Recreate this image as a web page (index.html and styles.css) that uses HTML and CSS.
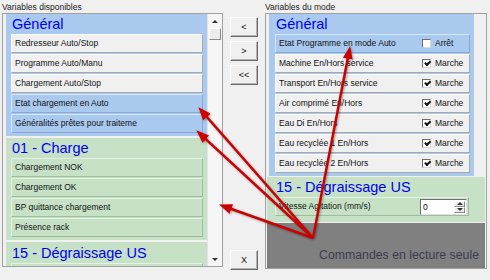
FILE: index.html
```html
<!DOCTYPE html>
<html lang="fr">

<head>
    <meta charset="UTF-8">
    <meta name="viewport" content="width=device-width, initial-scale=1.0">
    <title>Variables du mode</title>
    <link rel="stylesheet" href="styles.css">
</head>

<body>
    <div class="window">
        <!-- liste de gauche -->
        <section class="side side-left">
            <div class="caption">Variables disponibles</div>
            <div class="box box-left">
                <div class="list">
                    <div class="group group-blue">
                        <div class="group-head">Général</div>
                        <div class="item">Redresseur Auto/Stop</div>
                        <div class="item">Programme Auto/Manu</div>
                        <div class="item">Chargement Auto/Stop</div>
                        <div class="item sel">Etat chargement en Auto</div>
                        <div class="item sel">Généralités prêtes pour traiteme</div>
                    </div>
                    <div class="group group-green">
                        <div class="group-head">01 - Charge</div>
                        <div class="item">Chargement NOK</div>
                        <div class="item">Chargement OK</div>
                        <div class="item">BP quittance chargement</div>
                        <div class="item">Présence rack</div>
                    </div>
                    <div class="group group-green group-last">
                        <div class="group-head">15 - Dégraissage US</div>
                        <div class="item"></div>
                    </div>
                </div>
                <div class="scrollbar">
                    <div class="sb-btn"><span class="tri-up"></span></div>
                    <div class="sb-thumb"></div>
                    <div class="sb-track"></div>
                    <div class="sb-btn"><span class="tri-down"></span></div>
                </div>
            </div>
        </section>

        <!-- boutons -->
        <div class="buttons">
            <button class="btn">&lt;</button>
            <button class="btn">&gt;</button>
            <button class="btn">&lt;&lt;</button>
            <button class="btn btn-clear">X</button>
        </div>

        <!-- liste de droite -->
        <section class="side side-right">
            <div class="caption">Variables du mode</div>
            <div class="box box-right">
                <div class="group group-blue group-mode">
                    <div class="group-head">Général</div>
                    <div class="item row sel">
                        <span class="row-label">Etat Programme en mode Auto</span>
                        <span class="check"><span class="cb"></span>Arrêt</span>
                    </div>
                    <div class="item row">
                        <span class="row-label">Machine En/Hors service</span>
                        <span class="check"><span class="cb on"></span>Marche</span>
                    </div>
                    <div class="item row">
                        <span class="row-label">Transport En/Hors service</span>
                        <span class="check"><span class="cb on"></span>Marche</span>
                    </div>
                    <div class="item row">
                        <span class="row-label">Air comprimé En/Hors</span>
                        <span class="check"><span class="cb on"></span>Marche</span>
                    </div>
                    <div class="item row">
                        <span class="row-label">Eau Di En/Hors</span>
                        <span class="check"><span class="cb on"></span>Marche</span>
                    </div>
                    <div class="item row">
                        <span class="row-label">Eau recyclée 1 En/Hors</span>
                        <span class="check"><span class="cb on"></span>Marche</span>
                    </div>
                    <div class="item row">
                        <span class="row-label">Eau recyclée 2 En/Hors</span>
                        <span class="check"><span class="cb on"></span>Marche</span>
                    </div>
                </div>
                <div class="group group-green group-wide">
                    <div class="group-head">15 - Dégraissage US</div>
                    <div class="item row">
                        <span class="row-label">Vitesse Agitation (mm/s)</span>
                        <span class="spin">
                            <span class="spin-value">0</span>
                            <span class="spin-btns">
                                <span class="spin-up"><span class="tri-up"></span></span>
                                <span class="spin-down"><span class="tri-down"></span></span>
                            </span>
                        </span>
                    </div>
                </div>
                <div class="readonly">Commandes en lecture seule</div>
            </div>
        </section>
    </div>

    <!-- flèches d'annotation -->
    <svg class="arrows" width="490" height="280" viewBox="0 0 490 280">
        <defs>
            <marker id="head" markerWidth="13" markerHeight="10" refX="2" refY="5" orient="auto" markerUnits="userSpaceOnUse">
                <path d="M0,0 L13,5 L0,10 z" fill="#cc0000" />
            </marker>
        </defs>
        <g stroke="#cc0000" stroke-width="2.5" fill="none" marker-end="url(#head)">
            <line x1="313" y1="238" x2="205.6" y2="115.5" />
            <line x1="313" y1="238" x2="204.4" y2="137.8" />
            <line x1="313" y1="238" x2="229.4" y2="208.3" />
            <line x1="313" y1="238" x2="348.1" y2="56.8" />
        </g>
    </svg>
</body>

</html>
```

FILE: styles.css
```css
* {
    margin: 0;
    padding: 0;
    box-sizing: border-box;
    font-family: 'Liberation Sans', Arial, sans-serif;
}

body {
    background-color: #f0f0f0;
    color: #000;
    width: 490px;
    height: 280px;
    overflow: hidden;
    position: relative;
}

.window {
    display: flex;
    padding-left: 2px;
}

.side-left {
    width: 221px;
}

.side-right {
    width: 222px;
}

.caption {
    height: 13px;
    padding-top: 2px;
    font-size: 8.5px;
    line-height: 10px;
    color: #222;
}

.box {
    border: 1px solid #a0a0a0;
    background: #f0f0f0;
    overflow: hidden;
}

.box-left {
    height: 254px;
    display: flex;
}

.box-right {
    height: 256px;
    display: flex;
    flex-direction: column;
}

.list {
    flex: 1;
    overflow: hidden;
    padding-left: 3px;
}

.group {
    padding: 0 4px 2px 5px;
    margin-bottom: 2px;
}

.group-last {
    padding-top: 1px;
}

.group-blue {
    background: #a9c9ef;
}

.group-green {
    background: #c6e1c6;
}

.group-head {
    height: 20px;
    line-height: 20px;
    font-size: 14.5px;
    color: #0000f0;
    padding-left: 1px;
    white-space: nowrap;
}

.item {
    height: 19px;
    margin-bottom: 1px;
    border: 1px solid;
    border-color: #fdfdfd #a8a8a8 #a8a8a8 #fdfdfd;
    background: #f0f0f0;
    font-size: 8.5px;
    line-height: 17px;
    padding-left: 3px;
    white-space: nowrap;
    overflow: hidden;
    color: #111;
}

.item.sel {
    background: #a9c9ef;
    border-color: #d4e6fa #86a8d2 #86a8d2 #d4e6fa;
}

.group-green .item {
    background: #c6e1c6;
    border-color: #e4f2e4 #9cbc9c #9cbc9c #e4f2e4;
}

/* barre de défilement */
.scrollbar {
    width: 15px;
    display: flex;
    flex-direction: column;
    background: #f6f6f6;
    border-left: 1px solid #e4e4e4;
}

.sb-btn {
    height: 14px;
    display: flex;
    justify-content: center;
    align-items: center;
}

.sb-thumb {
    height: 12px;
    margin: 0 1px;
    border: 1px solid;
    border-color: #fff #8a8a8a #8a8a8a #fff;
    background: #ececec;
}

.sb-track {
    flex: 1;
}

.tri-up,
.tri-down {
    width: 0;
    height: 0;
    border-left: 3px solid transparent;
    border-right: 3px solid transparent;
}

.tri-up {
    border-bottom: 3px solid #333;
}

.tri-down {
    border-top: 3px solid #333;
}

/* boutons centraux */
.buttons {
    width: 42px;
    height: 270px;
    padding: 17px 7px 0;
    display: flex;
    flex-direction: column;
    gap: 4px;
}

.btn {
    height: 20px;
    background: #f0f0f0;
    border: 1px solid;
    border-color: #fff #6a6a6a #6a6a6a #fff;
    box-shadow: inset -1px -1px 0 #b4b4b4;
    font-size: 9px;
    color: #111;
}

.btn-clear {
    margin-top: auto;
}

/* panneau de droite */
.group-mode {
    margin: 0 12px 1px 3px;
    padding: 0 4px 2px 6px;
}

.group-wide {
    margin: 0 1px 0 1px;
    padding: 0 16px 5px 8px;
}

.group-mode .group-head,
.group-wide .group-head {
    padding-left: 1px;
}

.row {
    display: flex;
    align-items: center;
}

.row-label {
    flex: 1;
    overflow: hidden;
}

.check {
    width: 47px;
    display: flex;
    align-items: center;
    gap: 4px;
}

.cb {
    width: 9px;
    height: 9px;
    background: #fff;
    border: 1px solid;
    border-color: #6e6e6e #d8d8d8 #d8d8d8 #6e6e6e;
    position: relative;
}

.cb.on::after {
    content: '';
    position: absolute;
    left: 1px;
    top: 0;
    width: 4px;
    height: 2px;
    border-left: 2px solid #111;
    border-bottom: 2px solid #111;
    transform: rotate(-45deg) translate(0, 1px);
}

.spin {
    width: 47px;
    height: 16px;
    margin-right: 1px;
    background: #fff;
    border: 1px solid;
    border-color: #6e6e6e #e0e0e0 #e0e0e0 #6e6e6e;
    display: flex;
}

.spin-value {
    flex: 1;
    padding-left: 2px;
    line-height: 14px;
    font-size: 8.5px;
}

.spin-btns {
    width: 11px;
    margin: 1px 1px 1px 0;
    display: flex;
    flex-direction: column;
}

.spin-up,
.spin-down {
    flex: 1;
    background: #ececec;
    border: 1px solid;
    border-color: #fff #8a8a8a #8a8a8a #fff;
    display: flex;
    justify-content: center;
    align-items: center;
}

.readonly {
    flex: 1;
    margin: 1px 1px 0;
    background: #808080;
    color: #3c3c50;
    font-size: 12.3px;
    text-align: right;
    padding: 25px 6px 0 0;
    white-space: nowrap;
}

.arrows {
    position: absolute;
    top: 0;
    left: 0;
    pointer-events: none;
    filter: drop-shadow(1px 1px 1px rgba(0, 0, 0, 0.35));
}
```
